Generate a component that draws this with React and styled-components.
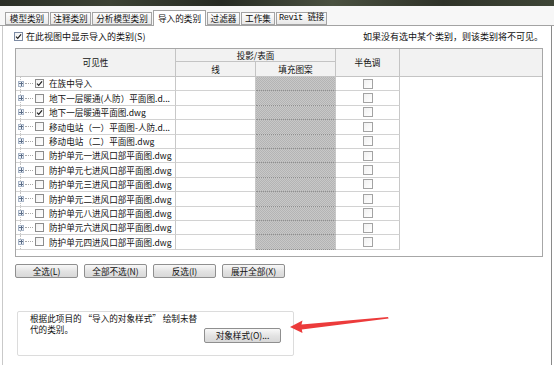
import React from "react";
import styled, { createGlobalStyle } from "styled-components";

const GlobalStyle = createGlobalStyle`
    html, body {
        margin: 0;
        padding: 0;
        background: #ffffff;
    }
    body {
        font-family: "Noto Sans CJK SC", "Noto Sans", sans-serif;
        color: #111111;
    }
`;

const Page = styled.div`
    position: relative;
    width: 554px;
    height: 365px;
    overflow: hidden;
    display: flex;
    flex-direction: column;
    background: #ffffff;
`;

const TopStrip = styled.div`
    height: 6px;
    background: linear-gradient(90deg, #2b2f27 0%, #3c4234 20%, #262a22 40%, #4a5140 60%, #2f3329 80%, #3e4536 100%);
`;

const TabBar = styled.div`
    height: 20px;
    display: flex;
    align-items: flex-end;
    gap: 1px;
    padding-left: 5px;
    background: #f7f7f7;
    border-bottom: 1px solid #a3a3a3;
    box-sizing: border-box;
`;

const Tab = styled.div`
    width: ${(p) => p.$w}px;
    height: ${(p) => (p.$active ? 16 : 13)}px;
    margin-bottom: ${(p) => (p.$active ? -1 : 0)}px;
    box-sizing: border-box;
    border: 1px solid #a3a3a3;
    border-bottom: ${(p) => (p.$active ? "none" : "1px solid #a3a3a3")};
    background: ${(p) => (p.$active ? "#ffffff" : "linear-gradient(#fdfdfd, #e8e8e8)")};
    display: flex;
    align-items: center;
    justify-content: center;
    font-size: 8.6px;
    font-family: ${(p) =>
        p.$mono ? '"Liberation Mono", "Noto Sans CJK SC", monospace' : '"Noto Sans CJK SC", sans-serif'};
    letter-spacing: ${(p) => (p.$mono ? "-0.4px" : "0")};
    line-height: 1;
    white-space: nowrap;
`;

const Panel = styled.div`
    flex: 1;
    margin: 0 2px 0 2px;
    border-left: 1px solid #c9c9c9;
    border-right: 1px solid #8a8a8a;
    padding: 4px 8px 0 12px;
    display: flex;
    flex-direction: column;
`;

const OptionRow = styled.div`
    height: 12px;
    display: flex;
    align-items: center;
    justify-content: space-between;
    font-size: 9px;
    line-height: 1;
`;

const OptionLabel = styled.label`
    display: flex;
    align-items: center;
    gap: 3px;
    margin-left: -1px;
`;

const Box = styled.span`
    width: ${(p) => p.$size}px;
    height: ${(p) => p.$size}px;
    box-sizing: border-box;
    border: 1px solid ${(p) => p.$tone};
    background: linear-gradient(135deg, #f1f1f1, #ffffff);
    display: inline-flex;
    align-items: center;
    justify-content: center;
    flex: none;
`;

function Check({ size = 9, checked, tone = "#8c8c8c" }) {
    return (
        <Box $size={size} $tone={tone}>
            {checked && (
                <svg width={size - 2} height={size - 2} viewBox="0 0 8 8">
                    <path d="M1.2 4.2 L3.1 6.1 L6.9 1.6" fill="none" stroke="#1e1e1e" strokeWidth="1.4" />
                </svg>
            )}
        </Box>
    );
}

const Table = styled.div`
    margin-top: 6px;
    height: 209px;
    box-sizing: border-box;
    border: 1px solid #a7a7a7;
    display: grid;
    grid-template-columns: 160px 80px 80px 64px 1fr;
    grid-template-rows: 13px 15px repeat(12, 14.4px) 1fr;
    font-size: 8.6px;
    line-height: 1;
`;

const HeadCell = styled.div`
    grid-column: ${(p) => p.$col};
    grid-row: ${(p) => p.$row};
    background: #f2f2f2;
    border-right: ${(p) => (p.$last ? "none" : "1px solid #c4c4c4")};
    border-bottom: 1px solid #c4c4c4;
    box-sizing: border-box;
    display: flex;
    align-items: center;
    justify-content: center;
    white-space: nowrap;
`;

const pattern = "repeating-conic-gradient(#b4b4b4 0 25%, #c8c8c8 0 50%) 0 0 / 2px 2px";

const Cell = styled.div`
    box-sizing: border-box;
    border-right: 1px solid #c8c8c8;
    border-bottom: 1px ${(p) => (p.$fill ? "dotted #8f8f8f" : "solid #d2d2d2")};
    background: ${(p) => (p.$fill ? pattern : "#ffffff")};
    display: flex;
    align-items: center;
    justify-content: ${(p) => (p.$center ? "center" : "flex-start")};
    overflow: hidden;
    white-space: nowrap;
`;

const NameCell = styled(Cell)`
    padding-left: 2px;
    position: relative;
`;

const TreeLine = styled.span`
    position: absolute;
    left: 4px;
    top: 0;
    bottom: 0;
    border-left: 1px dotted #c4c4c4;
`;

const Expander = styled.span`
    position: relative;
    width: 6px;
    height: 6px;
    box-sizing: border-box;
    border: 1px solid #a9b6c8;
    background: #eef2f8;
    flex: none;
    display: flex;
    align-items: center;
    justify-content: center;
    &::before {
        content: "";
        width: 4px;
        height: 1px;
        background: #5a6c86;
        position: absolute;
    }
    &::after {
        content: "";
        width: 1px;
        height: 4px;
        background: #5a6c86;
        position: absolute;
    }
`;

const Connector = styled.span`
    width: 8px;
    margin: 0 2px 0 1px;
    border-top: 1px dotted #a8a8a8;
    flex: none;
`;

const NameText = styled.span`
    margin-left: 5px;
`;

const Blank = styled.div`
    background: #ffffff;
`;

const Filler = styled.div`
    grid-column: 1 / -1;
    background: #ffffff;
`;

const ButtonRow = styled.div`
    margin-top: 7px;
    display: flex;
    gap: 6px;
`;

const Button = styled.button`
    width: ${(p) => p.$w || 63}px;
    height: ${(p) => p.$h || 14}px;
    padding: 0;
    box-sizing: border-box;
    border: 1px solid #8f8f8f;
    border-radius: 2px;
    background: linear-gradient(#f8f8f8, #e2e2e2 55%, #d8d8d8);
    font-family: "Noto Sans CJK SC", sans-serif;
    font-size: 8.6px;
    line-height: 1;
    color: #111111;
`;

const GroupBox = styled.div`
    margin: 33px 0 0 2px;
    width: 277px;
    height: 45px;
    box-sizing: border-box;
    border: 1px solid #dcdcdc;
    border-radius: 2px;
    display: flex;
    align-items: flex-start;
    padding: 1px 12px 0 12px;
`;

const Note = styled.p`
    margin: 0;
    font-size: 8.6px;
    line-height: 10.5px;
    white-space: nowrap;
`;

const NoteButtonWrap = styled.div`
    margin-left: auto;
    margin-top: 7px;
`;

const ArrowLayer = styled.svg`
    position: absolute;
    left: 0;
    top: 0;
    pointer-events: none;
`;

const tabs = [
    { label: "模型类别", w: 44 },
    { label: "注释类别", w: 41 },
    { label: "分析模型类别", w: 60 },
    { label: "导入的类别", w: 53, active: true },
    { label: "过滤器", w: 33 },
    { label: "工作集", w: 34 },
    { label: "Revit 链接", w: 51, mono: true },
];

const rows = [
    { name: "在族中导入", on: true },
    { name: "地下一层暖通(人防）平面图.d...", on: false },
    { name: "地下一层暖通平面图.dwg", on: true },
    { name: "移动电站（一）平面图-人防.d...", on: false },
    { name: "移动电站（二）平面图.dwg", on: false },
    { name: "防护单元一进风口部平面图.dwg", on: false },
    { name: "防护单元七进风口部平面图.dwg", on: false },
    { name: "防护单元三进风口部平面图.dwg", on: false },
    { name: "防护单元二进风口部平面图.dwg", on: false },
    { name: "防护单元八进风口部平面图.dwg", on: false },
    { name: "防护单元六进风口部平面图.dwg", on: false },
    { name: "防护单元四进风口部平面图.dwg", on: false },
];

function CategoryTable() {
    return (
        <Table>
            <HeadCell $col="1" $row="1 / 3">可见性</HeadCell>
            <HeadCell $col="2 / 4" $row="1">投影/表面</HeadCell>
            <HeadCell $col="2" $row="2">线</HeadCell>
            <HeadCell $col="3" $row="2">填充图案</HeadCell>
            <HeadCell $col="4" $row="1 / 3">半色调</HeadCell>
            <HeadCell $col="5" $row="1 / 3" $last />

            {rows.map((r) => (
                <React.Fragment key={r.name}>
                    <NameCell>
                        <TreeLine />
                        <Expander />
                        <Connector />
                        <Check size={9} checked={r.on} />
                        <NameText>{r.name}</NameText>
                    </NameCell>
                    <Cell />
                    <Cell $fill />
                    <Cell $center>
                        <Check size={10} tone="#a3a3a3" />
                    </Cell>
                    <Blank />
                </React.Fragment>
            ))}
            <Filler />
        </Table>
    );
}

export default function App() {
    return (
        <Page>
            <GlobalStyle />
            <TopStrip />
            <TabBar>
                {tabs.map((t) => (
                    <Tab key={t.label} $w={t.w} $active={t.active} $mono={t.mono}>
                        {t.label}
                    </Tab>
                ))}
            </TabBar>
            <Panel>
                <OptionRow>
                    <OptionLabel>
                        <Check size={9} checked tone="#7b8aa3" />
                        在此视图中显示导入的类别(S)
                    </OptionLabel>
                    <span>如果没有选中某个类别，则该类别将不可见。</span>
                </OptionRow>

                <CategoryTable />

                <ButtonRow>
                    <Button>全选(L)</Button>
                    <Button>全部不选(N)</Button>
                    <Button>反选(I)</Button>
                    <Button>展开全部(X)</Button>
                </ButtonRow>

                <GroupBox>
                    <Note>
                        根据此项目的 “导入的对象样式” 绘制未替
                        <br />
                        代的类别。
                    </Note>
                    <NoteButtonWrap>
                        <Button $w={77} $h={15}>对象样式(O)...</Button>
                    </NoteButtonWrap>
                </GroupBox>
            </Panel>

            <ArrowLayer width="554" height="365" viewBox="0 0 554 365">
                <polygon
                    points="290,327 302.5,320.5 301.5,324.6 388,317 388.6,318.4 301.8,329.6 302.5,333"
                    fill="#ec3b3b"
                />
            </ArrowLayer>
        </Page>
    );
}
